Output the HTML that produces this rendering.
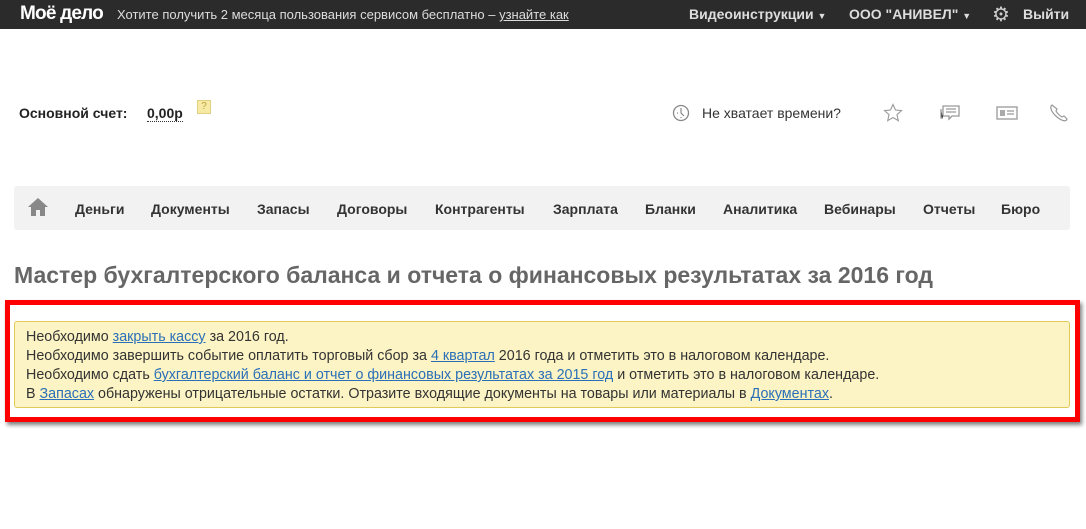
<!DOCTYPE html>
<html><head><meta charset="utf-8"><style>
*{margin:0;padding:0;box-sizing:border-box}
body{width:1086px;height:529px;background:#fff;font-family:"Liberation Sans",Arial,sans-serif;position:relative;overflow:hidden}
.top{position:absolute;left:0;top:0;width:1086px;height:29px;background:#2b2b2b;color:#fff}
.abs{position:absolute;white-space:nowrap}
a{color:#2a6fb8}
.nav{position:absolute;left:14px;top:186px;width:1056px;height:44px;background:#f2f2f2;border-radius:3px}
.nav span{position:absolute;top:15px;font-size:14px;font-weight:bold;color:#333}
</style></head><body>
<div class="top">
<div class="abs" style="left:20px;top:3px;font-size:19px;font-weight:bold;letter-spacing:-0.8px">Моё дело</div>
<div class="abs" style="left:117px;top:7px;font-size:13px;color:#ddd">Хотите получить 2 месяца пользования сервисом бесплатно – <u>узнайте как</u></div>
<div class="abs" style="left:689px;top:6px;font-size:14px;font-weight:bold;color:#ddd">Видеоинструкции <span style="font-size:9px">▼</span></div>
<div class="abs" style="left:849px;top:6px;font-size:14px;font-weight:bold;color:#ddd">ООО "АНИВЕЛ" <span style="font-size:9px">▼</span></div>
<div class="abs" style="left:992px;top:2px;font-size:20px;color:#ccc">⚙</div>
<div class="abs" style="left:1023px;top:6px;font-size:14px;font-weight:bold;color:#ddd">Выйти</div>
</div>
<div class="abs" style="left:19px;top:105px;font-size:14px;font-weight:bold;color:#222">Основной счет:</div>
<div class="abs" style="left:147px;top:105px;font-size:14px;font-weight:bold;color:#222;border-bottom:1px dotted #333;line-height:16px">0,00р</div>
<div class="abs" style="left:197px;top:100px;width:14px;height:14px;background:#f7eaa4;border:1px solid #e0d080;font-size:10px;color:#b9a040;text-align:center;line-height:12px">?</div>
<svg class="abs" style="left:672px;top:104px" width="18" height="18" viewBox="0 0 18 18"><circle cx="9" cy="9" r="7.5" fill="none" stroke="#888" stroke-width="1.3"/><path d="M9 4v5l3 3M5 9h1M9 13v1" stroke="#888" stroke-width="1.2" fill="none"/></svg>
<div class="abs" style="left:702px;top:105px;font-size:14px;color:#333">Не хватает времени?</div>
<svg class="abs" style="left:883px;top:103px" width="20" height="20" viewBox="0 0 20 20"><path d="M10 1.5l2.5 5.5 6 .6-4.5 4 1.3 6-5.3-3.1-5.3 3.1 1.3-6-4.5-4 6-.6z" fill="none" stroke="#999" stroke-width="1.1"/></svg>
<svg class="abs" style="left:939px;top:104px" width="22" height="18" viewBox="0 0 22 18"><path d="M4 2h16v10h-7l-3 3v-3H4z" fill="none" stroke="#999" stroke-width="1.3"/><path d="M2 5v9h2M7 5h10M7 8h10" stroke="#999" stroke-width="1.3"/></svg>
<svg class="abs" style="left:996px;top:106px" width="22" height="14" viewBox="0 0 22 14"><rect x="1" y="1" width="20" height="12" fill="none" stroke="#999" stroke-width="1.3"/><rect x="4" y="4" width="5" height="6" fill="#aaa"/><path d="M11 5h7M11 8h7" stroke="#999" stroke-width="1.3"/></svg>
<svg class="abs" style="left:1048px;top:103px" width="22" height="20" viewBox="0 0 22 20"><path d="M4 2c-3 2 0 8 5 12s9 5 10 2l-3-3-2 1c-2-1-5-4-6-6l1-2z" fill="none" stroke="#999" stroke-width="1.2"/></svg>
<div class="nav">
<svg style="position:absolute;left:13px;top:11px" width="22" height="19" viewBox="0 0 22 19"><path d="M11 1L1 10h3v9h5v-6h4v6h5v-9h3z" fill="#888"/></svg>
<span style="left:61px">Деньги</span><span style="left:137px">Документы</span><span style="left:243px">Запасы</span><span style="left:323px">Договоры</span><span style="left:421px">Контрагенты</span><span style="left:539px">Зарплата</span><span style="left:631px">Бланки</span><span style="left:709px">Аналитика</span><span style="left:810px">Вебинары</span><span style="left:909px">Отчеты</span><span style="left:987px">Бюро</span>
</div>
<div class="abs" style="left:14px;top:262px;font-size:23px;font-weight:bold;color:#666">Мастер бухгалтерского баланса и отчета о финансовых результатах за 2016 год</div>
<div class="abs" style="left:5px;top:300px;width:1075px;height:122px;border:5px solid #f00;box-shadow:2px 3px 4px rgba(0,0,0,.5)"></div>
<div class="abs" style="left:14px;top:321px;width:1056px;height:87px;background:#fcf4c4;border:1px solid #e3c95a;border-radius:3px;padding:6px 11px 0;font-size:14.3px;line-height:19px;color:#333">
Необходимо <a href="#">закрыть кассу</a> за 2016 год.<br>
Необходимо завершить событие оплатить торговый сбор за <a href="#">4 квартал</a> 2016 года и отметить это в налоговом календаре.<br>
Необходимо сдать <a href="#">бухгалтерский баланс и отчет о финансовых результатах за 2015 год</a> и отметить это в налоговом календаре.<br>
В <a href="#">Запасах</a> обнаружены отрицательные остатки. Отразите входящие документы на товары или материалы в <a href="#">Документах</a>.
</div>
</body></html>
